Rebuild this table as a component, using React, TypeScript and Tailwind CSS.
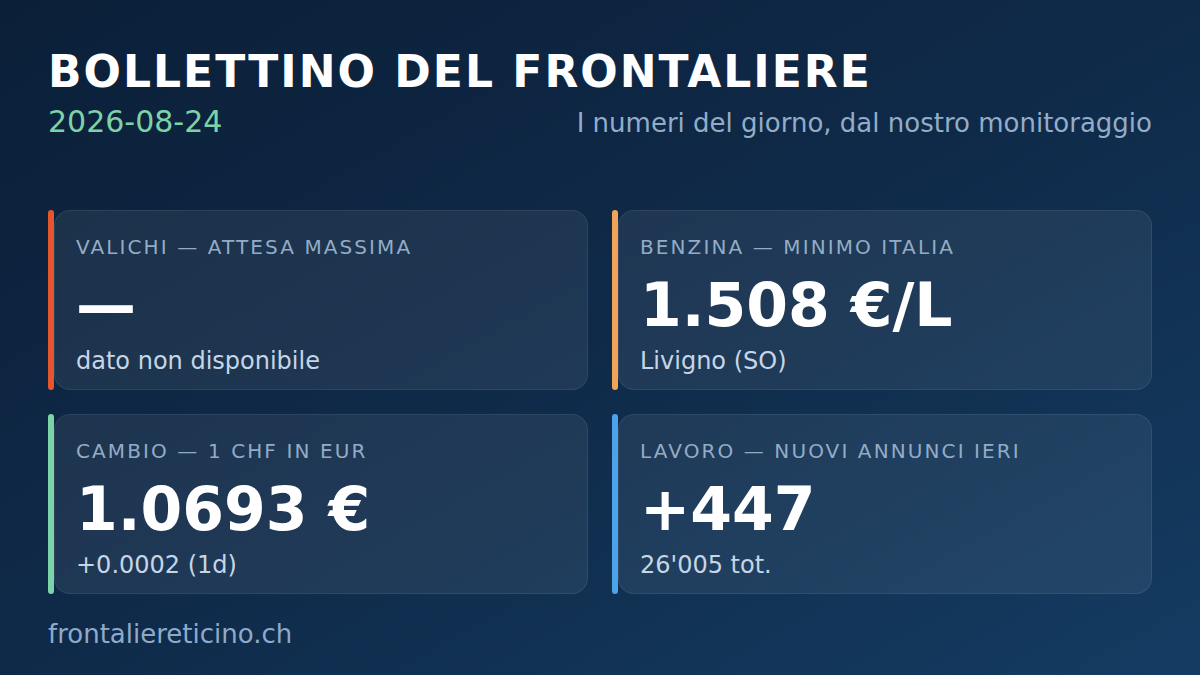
import React from 'react';

interface Stat {
    label: string;
    value: string;
    note: string;
    accent: string;
}

const stats: Stat[] = [
    { label: 'VALICHI — ATTESA MASSIMA', value: '—', note: 'dato non disponibile', accent: 'bg-[#e4572e]' },
    { label: 'BENZINA — MINIMO ITALIA', value: '1.508 €/L', note: 'Livigno (SO)', accent: 'bg-[#f2a35a]' },
    { label: 'CAMBIO — 1 CHF IN EUR', value: '1.0693 €', note: '+0.0002 (1d)', accent: 'bg-[#7dd3a8]' },
    { label: 'LAVORO — NUOVI ANNUNCI IERI', value: '+447', note: "26'005 tot.", accent: 'bg-[#4da3e8]' },
];

function StatCard({ stat }: { stat: Stat }) {
    return (
        <div className="flex h-[180px]">
            {/* Accent bar */}
            <div className={`w-[6px] shrink-0 rounded-full ${stat.accent}`} />
            <div className="flex-1 rounded-2xl border border-white/[0.08] bg-white/[0.065] pl-[21px] pt-[26px]">
                <div className="text-[20px] leading-5 tracking-[0.105em] text-[#93acc6]">{stat.label}</div>
                <div className="mt-[18px] text-[60px] font-bold leading-[60px] text-white">{stat.value}</div>
                <div className="mt-[14px] text-[24px] leading-6 text-[#c6d6e6]">{stat.note}</div>
            </div>
        </div>
    );
}

export default function App() {
    return (
        <div
            className="h-[675px] w-full overflow-hidden bg-linear-to-br from-[#0b1f38] via-[#0f2a49] to-[#143c62] px-12 pt-[50px]"
            style={{ fontFamily: '"DejaVu Sans", Verdana, sans-serif' }}
        >
            {/* Header */}
            <h1 className="text-[44px] font-bold leading-[44px] tracking-[0.046em] text-white">
                BOLLETTINO DEL FRONTALIERE
            </h1>
            <div className="mt-[13px] flex items-baseline justify-between">
                <span className="text-[30px] leading-[30px] text-[#7dd3a8]">2026-08-24</span>
                <span className="text-[26px] leading-[26px] text-[#93adc8]">
                    I numeri del giorno, dal nostro monitoraggio
                </span>
            </div>

            {/* Stats */}
            <div className="mt-[73px] grid grid-cols-2 gap-6">
                {stats.map((s) => (
                    <StatCard key={s.label} stat={s} />
                ))}
            </div>

            {/* Footer */}
            <div className="mt-[27px] text-[26px] leading-[26px] text-[#8eaaca]">frontaliereticino.ch</div>
        </div>
    );
}
